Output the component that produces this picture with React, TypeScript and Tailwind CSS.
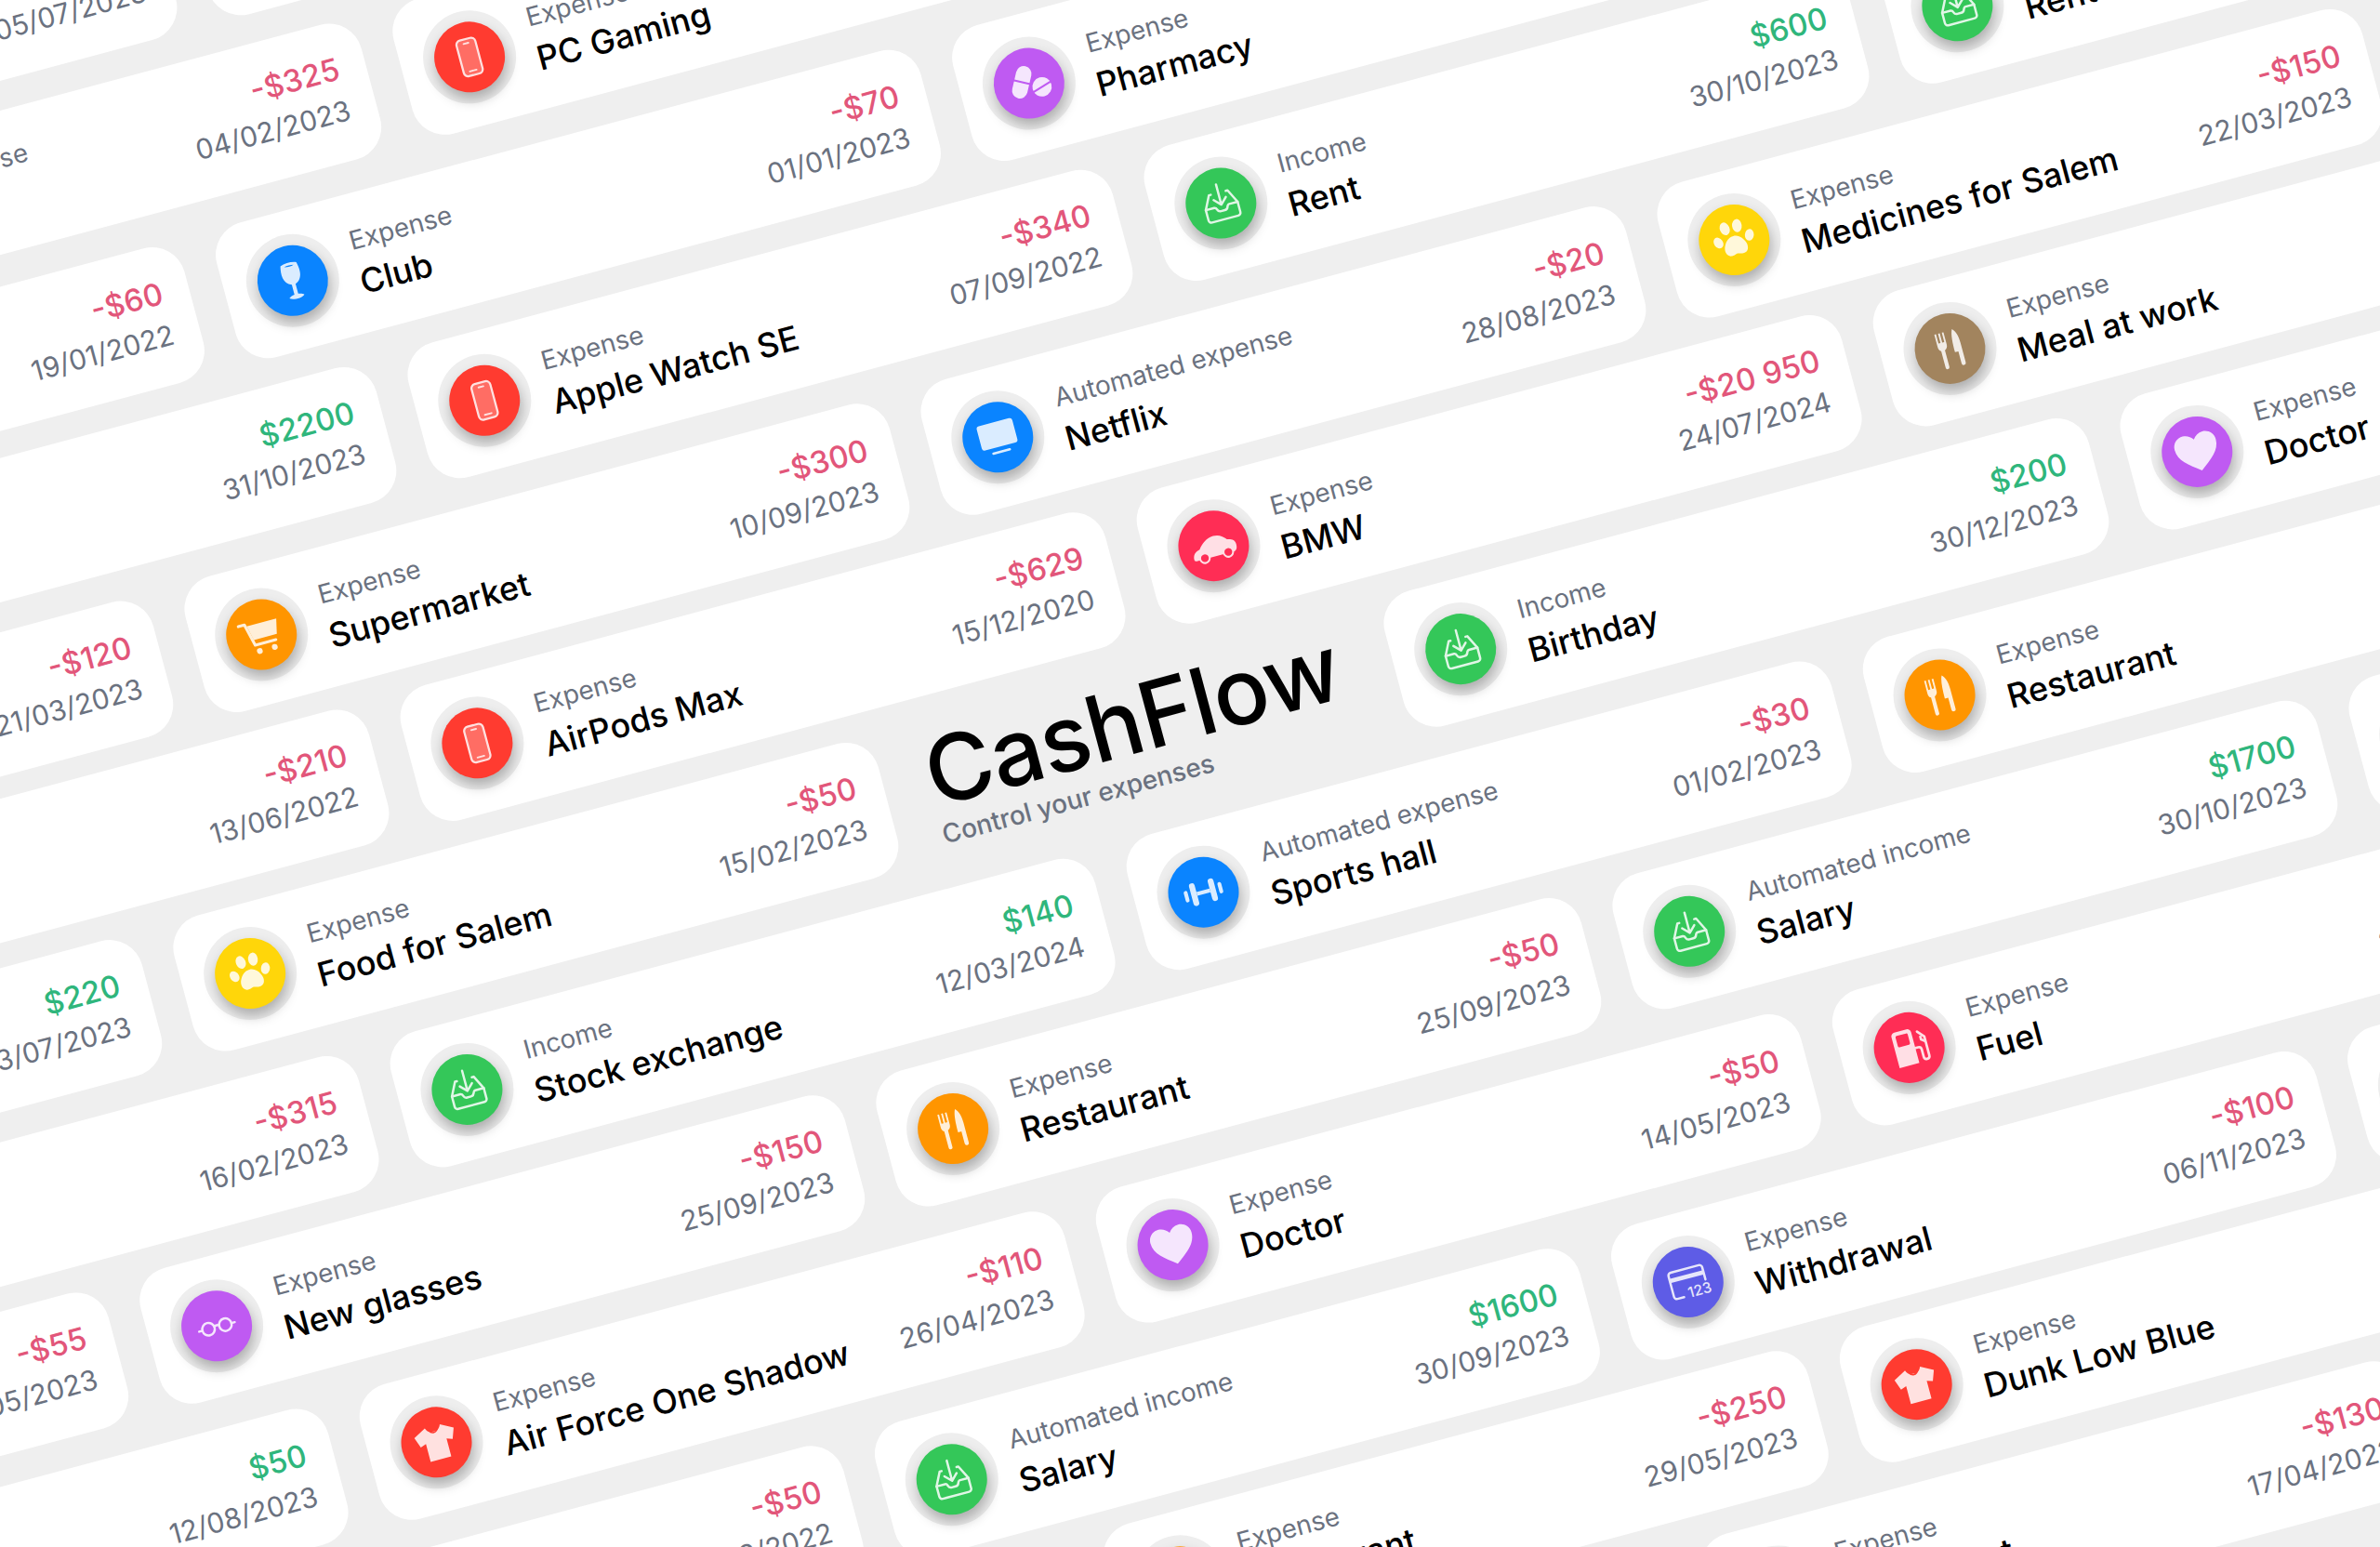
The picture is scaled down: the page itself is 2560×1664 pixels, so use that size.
import React from "react";

type Item = {
  label: string;
  name: string;
  amount: string;
  date: string;
  bg: string;
  icon: keyof typeof icons;
};

const Phone = () => (
  <>
    <rect x="14" y="5" width="20" height="38" rx="4.5" fill="currentColor" fillOpacity="0.3" stroke="currentColor" strokeWidth="2.2" />
    <rect x="20.5" y="8.5" width="7" height="1.8" rx="0.9" fill="currentColor" />
    <rect x="19.5" y="37.5" width="9" height="1.8" rx="0.9" fill="currentColor" />
  </>
);

const Wine = () => (
  <path fillRule="evenodd" d="M15.5 6.5c5-2 12-2 17 0 2 8 2.500 18-6.500 21.500v10.500c2.500.3 5 1.200 6 2.500-3 3-13 3-16 0 1-1.300 3.500-2.200 6-2.500V28C13 24.500 13.500 14.500 15.500 6.500zM19 8.500c3-.8 7-.8 10 0-3 1-7 1-10 0z" fill="currentColor" />
);

const Cart = () => (
  <>
    <path d="M3 10h6.500l5.500 23h22" fill="none" stroke="currentColor" strokeWidth="3" strokeLinecap="round" strokeLinejoin="round" />
    <path d="M11.500 12H43l-3.500 15.500H15z" fill="currentColor" />
    <circle cx="18" cy="40" r="3" fill="currentColor" />
    <circle cx="34" cy="40" r="3" fill="currentColor" />
  </>
);

const Inbox = () => (
  <g fill="none" stroke="currentColor" strokeWidth="2.400" strokeLinecap="round" strokeLinejoin="round">
    <path d="M16 13h-2L7 27v11a3 3 0 0 0 3 3h28a3 3 0 0 0 3-3V27l-7-14h-2" />
    <path d="M7 27h9c1.500 0 2 1 2.500 2.500S20 32 22 32h4c2 0 3-1 3.500-2.500S30.500 27 32 27h9" />
    <path d="M24 4v21M17.500 19l6.500 6.500 6.500-6.500" />
  </g>
);

const Pills = ({ hole }: { hole: string }) => (
  <g>
    <g transform="rotate(28 17 21)">
      <rect x="9" y="4" width="16" height="34" rx="8" fill="currentColor" />
      <path d="M8 21h18" stroke={hole} strokeWidth="2" />
    </g>
    <circle cx="36" cy="31" r="10" fill="currentColor" />
    <path d="M26 34l20-6" stroke={hole} strokeWidth="2" />
  </g>
);

const Paw = () => (
  <g fill="currentColor">
    <ellipse cx="7.500" cy="23" rx="4.600" ry="6" transform="rotate(-20 7.500 23)" />
    <ellipse cx="17.500" cy="10.500" rx="5" ry="6.800" transform="rotate(-8 17.500 10.500)" />
    <ellipse cx="30.500" cy="10.500" rx="5" ry="6.800" transform="rotate(8 30.500 10.500)" />
    <ellipse cx="40.500" cy="23" rx="4.600" ry="6" transform="rotate(20 40.500 23)" />
    <path d="M24 20c5 0 8.500 3.500 10.500 7.500 2.800 5 1.500 11-3 12-3.500.8-5-1-7.500-1s-4 1.800-7.500 1c-4.500-1-5.800-7-3-12C15.500 23.500 19 20 24 20z" />
  </g>
);

const Fork = () => (
  <g fill="currentColor">
    <path d="M12 6h1.800v10H16V6h1.800v10H20V6h1.800v13c0 3-1.600 4.500-3.300 5.300V42a2 2 0 0 1-4 0V24.300C12.800 23.500 12 22 12 19z" />
    <path d="M31 5c3.500 3 5 9 5 16v21a2.200 2.200 0 0 1-4.400 0V29H28c0-10 .5-19 3-24z" />
  </g>
);

const Dumbbell = () => (
  <g fill="currentColor">
    <rect x="4" y="18" width="4" height="12" rx="2" />
    <rect x="11" y="12" width="6" height="24" rx="3" />
    <rect x="17" y="22" width="14" height="4" />
    <rect x="31" y="12" width="6" height="24" rx="3" />
    <rect x="40" y="18" width="4" height="12" rx="2" />
  </g>
);

const Monitor = () => (
  <g fill="currentColor">
    <rect x="5" y="8" width="38" height="26" rx="3" />
    <rect x="14" y="38" width="20" height="2.600" rx="1.300" />
  </g>
);

const Heart = () => (
  <path d="M24 44C12 35 2 28 2 16.500 2 9.500 7.500 5 13.500 5c4.300 0 8 2.300 10.500 6 2.500-3.700 6.200-6 10.500-6C40.500 5 46 9.500 46 16.500 46 28 36 35 24 44z" fill="currentColor" />
);

const Car = ({ hole }: { hole: string }) => (
  <g>
    <path d="M1 33c0-5 3-8 8-9 4-5 10-10 17-10 6 0 10 3 13 7 5 1 8 3 8 7 0 4-1 7-5 7H4c-2 0-3-1-3-2z" fill="currentColor" />
    <circle cx="12" cy="34" r="5" fill={hole} stroke="currentColor" strokeWidth="2" />
    <circle cx="37" cy="34" r="5" fill={hole} stroke="currentColor" strokeWidth="2" />
  </g>
);

const Fuel = () => (
  <g>
    <path d="M9 9a4 4 0 0 1 4-4h13a4 4 0 0 1 4 4v33H9z" fill="currentColor" />
    <rect x="13" y="9" width="13" height="12" rx="1.500" fill="#ff2d55" />
    <path d="M30 26h3c2 0 3 1 3 3v8c0 4 6 4 6 0V17l-6-7" fill="none" stroke="currentColor" strokeWidth="2.600" strokeLinecap="round" strokeLinejoin="round" />
    <path d="M38 15v4l4 3" fill="none" stroke="currentColor" strokeWidth="2.600" />
  </g>
);

const Glasses = () => (
  <g fill="none" stroke="currentColor" strokeWidth="2.400" strokeLinecap="round">
    <circle cx="15" cy="25" r="6.500" />
    <circle cx="33" cy="25" r="6.500" />
    <path d="M21.500 24c1-1 4-1 5 0M8.500 25H5M39.500 25H43" />
  </g>
);

const BankCard = () => (
  <g>
    <path d="M16 38H9a3 3 0 0 1-3-3V13a3 3 0 0 1 3-3h30a3 3 0 0 1 3 3v13" fill="none" stroke="currentColor" strokeWidth="2.400" strokeLinecap="round" />
    <rect x="6" y="16" width="36" height="4.500" fill="currentColor" />
    <text x="46" y="40" textAnchor="end" fontSize="15" fontWeight="500" fill="currentColor" fontFamily="Inter, sans-serif">123</text>
  </g>
);

const Shirt = ({ hole }: { hole: string }) => (
  <g>
    <path d="M16 7l-13 7 4 11 6-2v19h22V23l6 2 4-11-13-7c-1.500 4-4 5.500-8 5.500S17.500 11 16 7z" fill="currentColor" />
    <path d="M19 10c1.500 2.500 3 3.500 5 3.500s3.500-1 5-3.500" fill="none" stroke={hole} strokeWidth="1.400" />
  </g>
);

const icons = {
  phone: Phone,
  wine: Wine,
  cart: Cart,
  inbox: Inbox,
  pills: Pills,
  paw: Paw,
  fork: Fork,
  dumbbell: Dumbbell,
  monitor: Monitor,
  heart: Heart,
  car: Car,
  fuel: Fuel,
  glasses: Glasses,
  card: BankCard,
  shirt: Shirt,
};

// ios system colours used by the circles
const blue = "bg-[#0a84ff]";
const red = "bg-[#ff3b30]";
const orange = "bg-[#ff9500]";
const green = "bg-[#34c759]";
const purple = "bg-[#bf5af2]";
const indigo = "bg-[#5e5ce6]";
const pink = "bg-[#ff2d55]";
const yellow = "bg-[#ffd60a]";
const brown = "bg-[#a2845e]";

const holeColor = (bg: string) => (bg === pink ? "#ff2d55" : bg === purple ? "#bf5af2" : "#ff3b30");

function Card({ item }: { item: Item }) {
  const Icon = icons[item.icon] as React.FC<{ hole: string }>;
  const income = !item.amount.startsWith("-");
  return (
    <div className="flex h-[150px] w-[784px] shrink-0 items-center justify-between rounded-[36px] bg-white pl-6 pr-[29px]">
      <div className="flex items-center gap-5">
        <div className="flex h-[100px] w-[100px] items-center justify-center rounded-full bg-[#eeeeee]">
          <div className={`flex h-[76px] w-[76px] items-center justify-center rounded-full shadow-[0_8px_14px_rgba(0,0,0,0.28)] ${item.bg}`}>
            <svg viewBox="0 0 48 48" className="h-[50px] w-[50px] text-white opacity-85">
              <Icon hole={holeColor(item.bg)} />
            </svg>
          </div>
        </div>
        <div className="flex flex-col gap-[6px]">
          <span className="text-[28px] leading-[36px] text-[#6b7280]">{item.label}</span>
          <span className="text-[36px] font-[450] leading-[44px] text-black">{item.name}</span>
        </div>
      </div>
      <div className="flex flex-col items-end gap-[7px] pb-[6px]">
        <span className={`text-[33px] font-medium leading-[42px] ${income ? "text-[#2fb67c]" : "text-[#e2567a]"}`}>{item.amount}</span>
        <span className="text-[30px] leading-[36px] text-[#6b7280]">{item.date}</span>
      </div>
    </div>
  );
}

const rowA: Item[] = [
  { label: "Expense", name: "Groceries", amount: "-$45", date: "05/07/2023", bg: orange, icon: "cart" },
  { label: "Expense", name: "Cinema", amount: "-$20", date: "11/02/2023", bg: blue, icon: "monitor" },
];
const rowB: Item[] = [
  { label: "Automated expense", name: "Gym", amount: "-$325", date: "04/02/2023", bg: blue, icon: "dumbbell" },
  { label: "Expense", name: "PC Gaming", amount: "-$1500", date: "12/11/2022", bg: red, icon: "phone" },
];
const rowC: Item[] = [
  { label: "Expense", name: "Bar", amount: "-$60", date: "19/01/2022", bg: blue, icon: "wine" },
  { label: "Expense", name: "Club", amount: "-$70", date: "01/01/2023", bg: blue, icon: "wine" },
  { label: "Expense", name: "Pharmacy", amount: "-$35", date: "03/03/2023", bg: purple, icon: "pills" },
];
const rowD: Item[] = [
  { label: "Income", name: "Bonus", amount: "$2200", date: "31/10/2023", bg: green, icon: "inbox" },
  { label: "Expense", name: "Apple Watch SE", amount: "-$340", date: "07/09/2022", bg: red, icon: "phone" },
  { label: "Income", name: "Rent", amount: "$600", date: "30/10/2023", bg: green, icon: "inbox" },
  { label: "Income", name: "Rent", amount: "$600", date: "30/09/2023", bg: green, icon: "inbox" },
];
const rowE: Item[] = [
  { label: "Expense", name: "Doctor", amount: "-$120", date: "21/03/2023", bg: purple, icon: "heart" },
  { label: "Expense", name: "Supermarket", amount: "-$300", date: "10/09/2023", bg: orange, icon: "cart" },
  { label: "Automated expense", name: "Netflix", amount: "-$20", date: "28/08/2023", bg: blue, icon: "monitor" },
  { label: "Expense", name: "Medicines for Salem", amount: "-$150", date: "22/03/2023", bg: yellow, icon: "paw" },
];
const rowF: Item[] = [
  { label: "Expense", name: "Fuel", amount: "-$210", date: "13/06/2022", bg: pink, icon: "fuel" },
  { label: "Expense", name: "AirPods Max", amount: "-$629", date: "15/12/2020", bg: red, icon: "phone" },
  { label: "Expense", name: "BMW", amount: "-$20 950", date: "24/07/2024", bg: pink, icon: "car" },
  { label: "Expense", name: "Meal at work", amount: "-$15", date: "09/05/2023", bg: brown, icon: "fork" },
];
const rowG: Item[] = [
  { label: "Income", name: "Gift", amount: "$220", date: "13/07/2023", bg: green, icon: "inbox" },
  { label: "Expense", name: "Food for Salem", amount: "-$50", date: "15/02/2023", bg: yellow, icon: "paw" },
];
const rowG2: Item[] = [
  { label: "Income", name: "Birthday", amount: "$200", date: "30/12/2023", bg: green, icon: "inbox" },
  { label: "Expense", name: "Doctor", amount: "-$80", date: "02/04/2023", bg: purple, icon: "heart" },
];
const rowH: Item[] = [
  { label: "Expense", name: "Shoes", amount: "-$315", date: "16/02/2023", bg: red, icon: "shirt" },
  { label: "Income", name: "Stock exchange", amount: "$140", date: "12/03/2024", bg: green, icon: "inbox" },
  { label: "Automated expense", name: "Sports hall", amount: "-$30", date: "01/02/2023", bg: blue, icon: "dumbbell" },
  { label: "Expense", name: "Restaurant", amount: "-$40", date: "18/06/2023", bg: orange, icon: "fork" },
];
const rowI: Item[] = [
  { label: "Expense", name: "Restaurant", amount: "-$55", date: "15/05/2023", bg: orange, icon: "fork" },
  { label: "Expense", name: "New glasses", amount: "-$150", date: "25/09/2023", bg: purple, icon: "glasses" },
  { label: "Expense", name: "Restaurant", amount: "-$50", date: "25/09/2023", bg: orange, icon: "fork" },
  { label: "Automated income", name: "Salary", amount: "$1700", date: "30/10/2023", bg: green, icon: "inbox" },
  { label: "Expense", name: "Fuel", amount: "-$60", date: "04/10/2023", bg: pink, icon: "fuel" },
];
const rowJ: Item[] = [
  { label: "Income", name: "Refund", amount: "$50", date: "12/08/2023", bg: green, icon: "inbox" },
  { label: "Expense", name: "Air Force One Shadow", amount: "-$110", date: "26/04/2023", bg: red, icon: "shirt" },
  { label: "Expense", name: "Doctor", amount: "-$50", date: "14/05/2023", bg: purple, icon: "heart" },
  { label: "Expense", name: "Fuel", amount: "-$70", date: "20/10/2023", bg: pink, icon: "fuel" },
];
const rowK: Item[] = [
  { label: "Expense", name: "Supermarket", amount: "-$50", date: "08/03/2022", bg: orange, icon: "cart" },
  { label: "Automated income", name: "Salary", amount: "$1600", date: "30/09/2023", bg: green, icon: "inbox" },
  { label: "Expense", name: "Withdrawal", amount: "-$100", date: "06/11/2023", bg: indigo, icon: "card" },
  { label: "Expense", name: "Club", amount: "-$30", date: "10/01/2023", bg: blue, icon: "wine" },
];
const rowL: Item[] = [
  { label: "Expense", name: "Netflix", amount: "-$20", date: "28/07/2023", bg: blue, icon: "monitor" },
  { label: "Expense", name: "Restaurant", amount: "-$250", date: "29/05/2023", bg: orange, icon: "fork" },
  { label: "Expense", name: "Dunk Low Blue", amount: "-$90", date: "11/04/2023", bg: red, icon: "shirt" },
];
const rowM: Item[] = [
  { label: "Expense", name: "Pharmacy", amount: "-$25", date: "02/02/2023", bg: purple, icon: "pills" },
  { label: "Expense", name: "Restaurant", amount: "-$130", date: "17/04/2023", bg: orange, icon: "fork" },
];

const rows = [
  { offset: "ml-[-601px]", items: rowA },
  { offset: "ml-[-422px] mt-[2px]", items: rowB },
  { offset: "ml-[-668px] mt-[5px]", items: rowC },
  { offset: "ml-[-502px] mt-[-1px]", items: rowD },
  { offset: "ml-[-799px] mt-[3px]", items: rowE },
  { offset: "ml-[-605px] mt-[-6px]", items: rowF },
];
const lowerRows = [
  { offset: "ml-[-712px] mt-[3px]", items: rowH },
  { offset: "ml-[-1038px] mt-[-3px]", items: rowI },
  { offset: "ml-[-842px] mt-[4px]", items: rowJ },
  { offset: "ml-[-317px] mt-[3px]", items: rowK },
  { offset: "ml-[-108px] mt-[-9px]", items: rowL },
  { offset: "ml-[510px] mt-[-1px]", items: rowM },
];

function Row({ offset, items }: { offset: string; items: Item[] }) {
  return (
    <div className={`flex w-max gap-9 ${offset}`}>
      {items.map((item, i) => (
        <Card key={i} item={item} />
      ))}
    </div>
  );
}

export default function App() {
  return (
    <div className="relative h-[1664px] w-[2560px] overflow-hidden bg-[#efefef] font-[family-name:Inter,sans-serif]">
      {/* the whole board is one tilted sheet, rows flow inside it */}
      <div className="absolute left-0 top-0 origin-top-left -rotate-15">
        <div className="mt-[-66px] flex flex-col gap-[28.6px]">
          {rows.map((r, i) => (
            <Row key={i} {...r} />
          ))}
          <div className="ml-[-905px] mt-[-3px] flex w-max gap-9">
            {rowG.map((item, i) => (
              <Card key={i} item={item} />
            ))}
            <div className="flex h-[150px] w-[492px] shrink-0 flex-col justify-center pl-[12px]">
              <h1 className="whitespace-nowrap text-[99px] font-medium leading-[98px] tracking-[-1px] text-black">CashFlow</h1>
              <p className="text-[28px] font-medium leading-[36px] text-[#6b7280]">Control your expenses</p>
            </div>
            {rowG2.map((item, i) => (
              <Card key={i} item={item} />
            ))}
          </div>
          {lowerRows.map((r, i) => (
            <Row key={i} {...r} />
          ))}
        </div>
      </div>
    </div>
  );
}
